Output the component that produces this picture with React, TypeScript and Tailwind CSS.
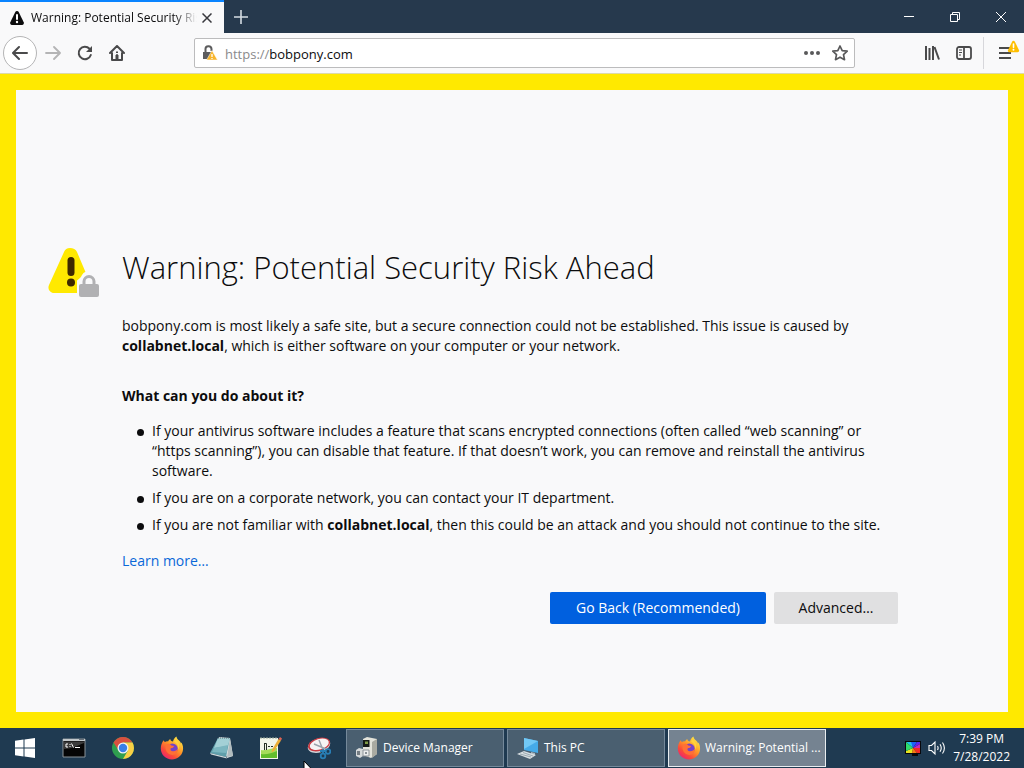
import type { ReactNode } from 'react';

function IconButton({ label, children, className = '' }: { label: string; children: ReactNode; className?: string }) {
    return (
        <button aria-label={label} className={`flex size-8 shrink-0 items-center justify-center text-[#4a4a4b] ${className}`}>
            {children}
        </button>
    );
}

function WarningTriangle({ className, fill, mark }: { className: string; fill: string; mark: string }) {
    return (
        <svg viewBox="0 0 16 16" className={className}>
            <path d="M8 1C7.2 1 6.6 1.4 6.3 2L1.3 12.3C.7 13.6 1.5 15 2.9 15H13.1C14.5 15 15.3 13.6 14.7 12.3L9.7 2C9.4 1.4 8.8 1 8 1Z" fill={fill} />
            <path d="M8 5V9" stroke={mark} strokeWidth="2" strokeLinecap="round" />
            <circle cx="8" cy="12" r="1.2" fill={mark} />
        </svg>
    );
}

function FirefoxLogo() {
    return (
        <svg viewBox="0 0 24 24" className="size-6">
            <defs>
                <linearGradient id="fox" x1="0.85" y1="0.1" x2="0.2" y2="0.95">
                    <stop offset="0" stopColor="#ffe544" />
                    <stop offset="0.4" stopColor="#ff9a27" />
                    <stop offset="0.75" stopColor="#fb4a38" />
                    <stop offset="1" stopColor="#ec2470" />
                </linearGradient>
            </defs>
            <path d="M3.5 4.2C3.8 5 4.3 5.6 5 6C6 5.4 7.1 5.2 8 5.5C8.5 4.3 9.3 3.5 10.3 3C10.2 4.5 11.6 5.4 13 5.5C13.5 3.7 14.5 2 16.4.6C16.8 3.2 18.7 4.2 20.2 5.8C20.6 6.3 20.8 7 20.9 7.5L21.4 6.5C23 9 23.5 12 22.8 15C21.6 20 17.2 23.4 12 23.4C5.7 23.4.8 18.6.8 12.5C.8 9.3 1.8 6.7 3.5 4.2Z" fill="url(#fox)" />
            <circle cx="12.3" cy="12.8" r="5.4" fill="#7542c9" />
            <path d="M6 8.5C8.5 7.2 10.2 8 11.3 9.5L14 10C13.7 11.7 12.2 12 10.8 12.3C9.8 13.8 11 15.4 13.3 15.2C15.5 15 16.8 13.8 17.7 13.2C17.5 17.8 13.8 19.7 10.5 18.6C6.3 17.2 4.6 12.7 6 8.5Z" fill="#ff7036" />
            <path d="M14.2 5.7C17.3 7.3 18.8 10.3 17.8 14C20 11.5 19.8 8 17 5L15.5 3Z" fill="#ffd23e" />
        </svg>
    );
}

function WindowsLogo() {
    return (
        <svg viewBox="0 0 20 20" className="size-5 fill-white">
            <path d="M0 2.8 8.5 1.6V9.5H0ZM9.5 1.4 20 0V9.5H9.5ZM0 10.5H8.5V18.4L0 17.2ZM9.5 10.5H20V20L9.5 18.6Z" />
        </svg>
    );
}

function TerminalIcon() {
    return (
        <svg viewBox="0 0 24 24" className="size-6">
            <path d="M1 3H23V21H1Z" fill="#050505" stroke="#8b9399" />
            <path d="M1 3H23V5H1Z" fill="#c2c7ca" />
            <path d="M17 3.5H22" stroke="#68717a" />
            <path d="M2 13C9 13 15 10 22 7V5.5H2Z" fill="#3b3b3b" />
            <path d="M6 8H4V11H6M8 8V9M8 10V11M9.5 7.5 11.5 11.5M13 11.5H18" fill="none" stroke="#fff" />
        </svg>
    );
}

function ChromeLogo() {
    return (
        <svg viewBox="0 0 24 24" className="size-6">
            <circle cx="12" cy="12" r="11" fill="#2f9e4f" />
            <path d="M2.5 6.5A11 11 0 0 1 21.5 6.5H12L7.7 14.5Z" fill="#d9503f" />
            <path d="M12 6.5H21.5A11 11 0 0 1 12 23L16.8 14.7Z" fill="#f9cf45" />
            <circle cx="12" cy="12" r="5.5" fill="#f3f3f3" />
            <circle cx="12" cy="12" r="4.2" fill="#397fe7" />
        </svg>
    );
}

function NotepadIcon() {
    return (
        <svg viewBox="0 0 24 24" className="size-6">
            <path d="M10 1 21 2 24 20 18 22Z" fill="#dfe5e6" />
            <path d="M9 2 21 2 17 21 1 17Z" fill="#5f9fab" />
            <path d="M9 2 21 2 19 10 5 12Z" fill="#a3d0d6" />
            <path d="M5 12 19 9 17.500 17 3 16Z" fill="#7bb6c0" />
            <path d="M1 17 17 21 18 22.500 2 18.500Z" fill="#d3dcde" />
            <path d="M9 2H21" stroke="#566a70" strokeDasharray="1 1" />
            <path d="M21 3 18 21 24 20Z" fill="#b1bcbf" />
        </svg>
    );
}

function NotepadPlusIcon() {
    return (
        <svg viewBox="0 0 24 24" className="size-6">
            <path d="M2 2H20V23H2Z" fill="#f2f5e9" />
            <path d="M3 14C8 15 14 12 19 12V22H3Z" fill="#a6dc5b" />
            <path d="M3 18C8 19 14 17 19 15V22H3Z" fill="#62bd2c" />
            <path d="M3 1V3M6 1V3M9 1V3M12 1V3M15 1V3M18 1V3" stroke="#9aa89a" />
            <path d="M6.500 7V14M6 7.500H8.500V14M10 10.500H12M13 10.500H15" fill="none" stroke="#253025" />
            <path d="M20.500 3 14.500 13 13.500 16.500 16.500 14.500 23 4.500Z" fill="#edaf35" />
            <path d="M20.500 3 23 4.500 24 2.500 22 1Z" fill="#df6354" />
        </svg>
    );
}

function SnippingIcon() {
    return (
        <svg viewBox="0 0 24 24" className="size-6">
            <ellipse cx="12" cy="9.500" rx="11.500" ry="7" transform="rotate(-16 12 9.500)" fill="#d3d6da" />
            <ellipse cx="12" cy="8.500" rx="11.300" ry="6.500" transform="rotate(-16 12 8.500)" fill="#c93a42" />
            <ellipse cx="12.300" cy="8.300" rx="9.800" ry="5.200" transform="rotate(-16 12.300 8.300)" fill="#f6f4f4" />
            <path d="M7 8 19 13M12 4 16 14" stroke="#9ba4ad" strokeWidth="1.400" />
            <circle cx="16" cy="20" r="2.300" fill="none" stroke="#287eb5" strokeWidth="1.800" />
            <circle cx="21" cy="15.500" r="2.300" fill="none" stroke="#287eb5" strokeWidth="1.800" />
            <path d="M16 17.500 16 13M19 15 13 15" fill="none" stroke="#287eb5" strokeWidth="1.800" />
        </svg>
    );
}

function DeviceManagerIcon() {
    return (
        <svg viewBox="0 0 24 24" className="size-6">
            <path d="M8 3 12 1 22 3V18L16 22 8 19Z" fill="#e3e3da" />
            <path d="M17 6 22 3V18L17 22Z" fill="#a9aaa1" />
            <path d="M8 4H14.500V11H8Z" fill="#151a16" />
            <path d="M10 5.500H13V8H10Z" fill="#7f9b45" />
            <path d="M1 14 4 12 8 13V20L5 22 1 20Z" fill="#d5d9da" />
            <path d="M2 15H5V19H2Z" fill="#747c82" />
            <path d="M8 14H14V20H8Z" fill="#eceeee" stroke="#8d9499" />
            <path d="M10 16H12V18H10Z" fill="#8a9297" />
        </svg>
    );
}

function ThisPcIcon() {
    return (
        <svg viewBox="0 0 24 24" className="size-6">
            <path d="M8 2 22 5V17L8 14Z" fill="#45aae8" />
            <path d="M8 2 22 5 8 13Z" fill="#72c8f5" />
            <path d="M15 16V19L19 20V17Z" fill="#a7b7c0" />
            <path d="M1 18 8 15 20 19 14 23Z" fill="#d8dee1" />
            <path d="M4 18 15 21M7 16.500 17 20" stroke="#9aa9b1" />
        </svg>
    );
}

const launchers = [
    { label: 'Start', icon: <WindowsLogo /> },
    { label: 'Command Prompt', icon: <TerminalIcon /> },
    { label: 'Google Chrome', icon: <ChromeLogo /> },
    { label: 'Firefox', icon: <FirefoxLogo /> },
    { label: 'Notepad', icon: <NotepadIcon /> },
    { label: 'Notepad++', icon: <NotepadPlusIcon /> },
    { label: 'Snipping Tool', icon: <SnippingIcon /> },
];

const windows = [
    { title: 'Device Manager', icon: <DeviceManagerIcon />, active: false },
    { title: 'This PC', icon: <ThisPcIcon />, active: false },
    { title: 'Warning: Potential ...', icon: <FirefoxLogo />, active: true },
];

function TitleBar() {
    return (
        <header className="flex h-[33px] bg-[#26394d]">
            <div className="flex w-56 items-center border-t-2 border-[#0a84ff] bg-[#f9f9fa] pl-[9px]">
                <WarningTriangle className="mr-1.5 size-4 shrink-0" fill="#0c0c0d" mark="#fff" />
                <span className="w-[166px] overflow-hidden text-xs whitespace-nowrap text-[#0c0c0d] [mask-image:linear-gradient(to_right,black_86%,transparent)]">
                    Warning: Potential Security Risk Ahead
                </span>
                <button aria-label="Close tab" className="flex size-5 items-center justify-center text-[#38383d]">
                    <svg viewBox="0 0 10 10" className="size-2.5" fill="none" stroke="currentColor" strokeWidth="1.5">
                        <path d="M.5.5 9.500 9.500M9.500.5.5 9.500" />
                    </svg>
                </button>
            </div>
            <button aria-label="New tab" className="flex w-[34px] items-center justify-center text-[#d5dde3]">
                <svg viewBox="0 0 14 14" className="size-3.5" fill="none" stroke="currentColor" strokeWidth="1.6">
                    <path d="M7 0V14M0 7H14" />
                </svg>
            </button>
            <div className="ml-auto flex text-white">
                <button aria-label="Minimize" className="flex w-[46px] items-center justify-center">
                    <svg viewBox="0 0 10 10" className="size-2.5" stroke="currentColor"><path d="M0 4.500H10" /></svg>
                </button>
                <button aria-label="Restore" className="flex w-[46px] items-center justify-center">
                    <svg viewBox="0 0 10 10" className="size-2.5" fill="none" stroke="currentColor">
                        <path d="M.5 2.500H7.500V9.500H.5ZM2.500 2.500V.5H9.500V7.500H7.500" />
                    </svg>
                </button>
                <button aria-label="Close" className="flex w-[46px] items-center justify-center">
                    <svg viewBox="0 0 10 10" className="size-2.5" stroke="currentColor"><path d="M0 0 10 10M10 0 0 10" /></svg>
                </button>
            </div>
        </header>
    );
}

function Toolbar() {
    return (
        <nav className="flex h-[41px] items-center border-b border-[#dcd9a8] bg-[#f9f9fa] pl-1">
            <IconButton label="Back" className="mr-px rounded-full bg-white outline outline-[#b5b5b6]">
                <svg viewBox="0 0 16 16" className="size-4" fill="none" stroke="currentColor" strokeWidth="2" strokeLinecap="round" strokeLinejoin="round">
                    <path d="M15 8H1.500M7 2 1 8 7 14" />
                </svg>
            </IconButton>
            <IconButton label="Forward">
                <svg viewBox="0 0 16 16" className="size-4" fill="none" stroke="#b4b4b5" strokeWidth="1.800" strokeLinecap="round" strokeLinejoin="round">
                    <path d="M1 8H14.500M9 2 15 8 9 14" />
                </svg>
            </IconButton>
            <IconButton label="Reload">
                <svg viewBox="0 0 16 16" className="size-4" fill="none" stroke="currentColor" strokeWidth="2" strokeLinecap="round">
                    <path d="M13.800 10A6.200 6.200 0 1 1 12.500 3.800" />
                    <path d="M15 1V7H9Z" fill="currentColor" stroke="none" />
                </svg>
            </IconButton>
            <IconButton label="Home">
                <svg viewBox="0 0 16 16" className="size-4" fill="none" stroke="currentColor" strokeWidth="2" strokeLinecap="round" strokeLinejoin="round">
                    <path d="M1 8 8 1 15 8M3 8V15H13V8" />
                    <path d="M6.500 15V10H9.500V15Z" fill="currentColor" stroke="none" />
                    <path d="M7 6.500H9V8H7Z" fill="currentColor" stroke="none" />
                    <path d="M8 10V14" />
                </svg>
            </IconButton>
            <div className="mr-[61px] ml-[61px] flex h-[30px] min-w-0 flex-1 items-center rounded-xs border border-[#bcbcbd] bg-white pr-1.5 pl-[7px]">
                <button aria-label="Site information" className="mr-[7px]">
                    <svg viewBox="0 0 16 16" className="size-4">
                        <path d="M3.500 8V4.500A3 3 0 0 1 9.500 4V6" fill="none" stroke="#5c5c5d" strokeWidth="2" />
                        <path d="M1 7H10V14H1Z" fill="#5c5c5d" />
                        <path d="M10 5.500 15.500 15H4.500Z" fill="#f8b52a" stroke="#fff" strokeWidth="0.500" />
                        <path d="M10 9V12M10 13V14" stroke="#fff" strokeWidth="1.300" />
                    </svg>
                </button>
                <div className="flex min-w-0 flex-1 pt-0.5 text-[13px] leading-5">
                    <label htmlFor="url" className="text-[#8a8a8b]">https://</label>
                    <input id="url" defaultValue="bobpony.com" className="min-w-0 flex-1 bg-transparent text-[#0c0c0d] outline-none" />
                </div>
                <button aria-label="Page actions" className="mr-3">
                    <svg viewBox="0 0 16 16" className="size-4 fill-[#59595a]">
                        <circle cx="2" cy="8" r="2" /><circle cx="8" cy="8" r="2" /><circle cx="14" cy="8" r="2" />
                    </svg>
                </button>
                <button aria-label="Bookmark this page">
                    <svg viewBox="0 0 16 16" className="size-4" fill="none" stroke="#59595a" strokeWidth="1.700" strokeLinejoin="round">
                        <path d="M8 1 10.200 5.600 15.200 6.200 11.500 9.600 12.500 14.700 8 12.200 3.500 14.700 4.500 9.600.8 6.200 5.800 5.600Z" />
                    </svg>
                </button>
            </div>
            <IconButton label="Library">
                <svg viewBox="0 0 16 16" className="size-4" fill="none" stroke="currentColor" strokeWidth="2">
                    <path d="M2 1V15M5.500 3V15M9 1V15M10.500 2 15 14.500" />
                </svg>
            </IconButton>
            <IconButton label="Sidebars">
                <svg viewBox="0 0 16 16" className="size-4" fill="none" stroke="currentColor" strokeWidth="1.800">
                    <rect x="1" y="2" width="14" height="12" rx="2" />
                    <path d="M8 2V14" />
                    <path d="M3 5H6M3 7.500H6M3 10H5" strokeWidth="1" />
                </svg>
            </IconButton>
            <div className="ml-[3px] h-8 w-px bg-[#d7d7db]" />
            <IconButton label="Open menu" className="relative mr-0.5 ml-1.5">
                <svg viewBox="0 0 16 16" className="size-4" fill="none" stroke="currentColor" strokeWidth="2">
                    <path d="M1 3H13M1 8H13M1 13H13" />
                </svg>
                <WarningTriangle className="absolute top-[3px] right-0.5 size-[13px]" fill="#ffbf00" mark="#fff" />
            </IconButton>
        </nav>
    );
}

const bullet =
    "relative before:absolute before:top-2 before:-left-[15px] before:size-[7px] before:rounded-full before:bg-[#0c0c0d] before:content-['']";

function WarningPage() {
    return (
        <main className="flex flex-1 border-16 border-[#ffe900] bg-[#f9f9fa] px-8 pt-[156px] pb-[88px] text-sm leading-5 text-[#0c0c0d]">
            <div className="w-[74px] shrink-0">
                <svg viewBox="0 0 52 52" className="size-[52px]">
                    <path d="M22 2C19 2 17 3.500 16 6L1 39C-.8 43 2 47 6 47H38C42 47 44.800 43 43 39L29 6C28 3.500 25 2 22 2Z" fill="#ffe900" />
                    <path d="M29 34.500C32 32.500 33 31 34 29C36 26 38 25 41 25C46 25 49 28 50 33L52 35V51H29Z" fill="#f9f9fa" />
                    <rect x="19.500" y="11" width="7" height="19" rx="3.500" fill="#3e2800" />
                    <circle cx="23" cy="36.500" r="4" fill="#3e2800" />
                    <path d="M36 39V35.500A5 5 0 0 1 46 35.500V39" fill="none" stroke="#b1b1b3" strokeWidth="3" />
                    <rect x="31" y="38" width="20" height="13" rx="2" fill="#b1b1b3" />
                </svg>
            </div>
            <div className="max-w-[776px] flex-1">
                <h1 className="text-[31px] leading-[42px] font-light">Warning: Potential Security Risk Ahead</h1>
                <p className="mt-7">
                    bobpony.com is most likely a safe site, but a secure connection could not be established. This issue is caused by{' '}
                    <b>collabnet.local</b>, which is either software on your computer or your network.
                </p>
                <h2 className="mt-[30px] font-bold">What can you do about it?</h2>
                <ul className="mt-[15px] space-y-[7px] pl-[30px]">
                    <li className={bullet}>
                        If your antivirus software includes a feature that scans encrypted connections (often called “web scanning” or
                        “https scanning”), you can disable that feature. If that doesn’t work, you can remove and reinstall the antivirus
                        software.
                    </li>
                    <li className={bullet}>If you are on a corporate network, you can contact your IT department.</li>
                    <li className={bullet}>
                        If you are not familiar with <b>collabnet.local</b>, then this could be an attack and you should not continue to the site.
                    </li>
                </ul>
                <a href="#learn-more" className="mt-4 inline-block text-[#0a68d8]">Learn more…</a>
                <div className="mt-[21px] flex justify-end gap-2">
                    <button className="h-8 w-[216px] rounded-xs bg-[#0060df] text-white">Go Back (Recommended)</button>
                    <button className="h-8 w-[124px] rounded-xs bg-[#e0e0e1]">Advanced…</button>
                </div>
            </div>
        </main>
    );
}

function Taskbar() {
    return (
        <footer className="relative flex h-10 bg-[#1f3a51] text-xs text-white">
            {launchers.map(item => (
                <button key={item.label} aria-label={item.label} className="flex w-[49px] items-center justify-center">
                    {item.icon}
                </button>
            ))}
            <div className="ml-[3px] flex gap-[3px] py-px">
                {windows.map(win => (
                    <button
                        key={win.title}
                        className={`flex w-[158px] items-center gap-1 border pl-2 whitespace-nowrap ${
                            win.active ? 'border-[#e8edf0] bg-[#758391]' : 'border-[#75899a] bg-[#4a5f70]'
                        }`}
                    >
                        {win.icon}
                        {win.title}
                    </button>
                ))}
            </div>
            <div className="ml-auto flex items-center pr-3.5">
                <button aria-label="Display colors" className="mr-[7px]">
                    <svg viewBox="0 0 16 16" className="size-4">
                        <path d="M0 1H16V14H13V16H7V14H0Z" fill="#08080c" />
                        <path d="M1 2H7L8 8Z" fill="#1fc3ea" />
                        <path d="M6 2H12L8 8Z" fill="#1c63f5" />
                        <path d="M12 2H15V4L8 8Z" fill="#5a2bf0" />
                        <path d="M15 4V8L8 8Z" fill="#c52bb5" />
                        <path d="M15 8V13H12L8 8Z" fill="#f22b24" />
                        <path d="M12 13H7L8 8Z" fill="#f47a16" />
                        <path d="M7 13H1V11L8 8Z" fill="#e8e420" />
                        <path d="M1 2V11L8 8Z" fill="#2fdc6c" />
                    </svg>
                </button>
                <button aria-label="Volume" className="mr-[7px]">
                    <svg viewBox="0 0 18 16" className="h-4 w-[18px]" fill="none" stroke="#fff" strokeWidth="1.100">
                        <path d="M1 5.500H3.500L7 2V14L3.500 10.500H1Z" />
                        <path d="M9.500 6Q10.700 8 9.500 10M12 4.200Q14.500 8 12 11.800M14.500 2.500Q18.300 8 14.500 13.500" />
                    </svg>
                </button>
                <div className="text-center leading-[18px]">
                    <div>7:39 PM</div>
                    <div>7/28/2022</div>
                </div>
            </div>
            <svg viewBox="0 0 12 19" className="absolute top-8 left-[303px] h-[19px] w-3">
                <path d="M1 1V15L4.500 12 7 17.500 9 16.500 6.500 11.500H11Z" fill="#fff" stroke="#000" />
            </svg>
        </footer>
    );
}

export default function App() {
    return (
        <div className="flex min-h-screen flex-col overflow-hidden font-['Open_Sans','Noto_Sans',sans-serif]">
            <TitleBar />
            <Toolbar />
            <WarningPage />
            <Taskbar />
        </div>
    );
}
